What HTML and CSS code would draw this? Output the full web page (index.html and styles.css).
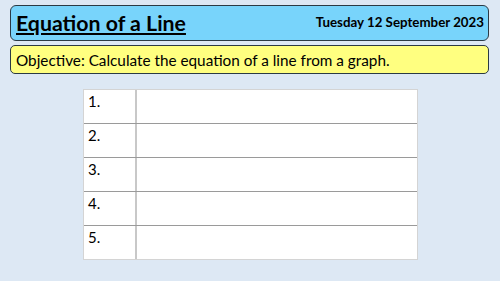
FILE: index.html
```html
<!DOCTYPE html>
<html>
<head>
<meta charset="utf-8">
<link rel="stylesheet" href="styles.css">
</head>
<body>
<div class="slide">
  <header class="title-bar">
    <h1 class="title">Equation of a Line</h1>
    <div class="date">Tuesday 12 September 2023</div>
  </header>
  <div class="objective">Objective: Calculate the equation of a line from a graph.</div>
  <div class="table">
    <div class="row"><div class="num">1.</div><div class="cell"></div></div>
    <div class="row"><div class="num">2.</div><div class="cell"></div></div>
    <div class="row"><div class="num">3.</div><div class="cell"></div></div>
    <div class="row"><div class="num">4.</div><div class="cell"></div></div>
    <div class="row"><div class="num">5.</div><div class="cell"></div></div>
  </div>
</div>
</body>
</html>
```
FILE: styles.css
```css
html, body {
  margin: 0;
  padding: 0;
}
body {
  width: 500px;
  height: 281px;
  background: #dde8f4;
  font-family: Lato, "Open Sans", sans-serif;
  color: #000;
  overflow: hidden;
}
.slide {
  padding: 5px 11px 0 10px;
  display: flex;
  flex-direction: column;
}
.title-bar {
  height: 36px;
  box-sizing: border-box;
  background: #78d4fb;
  border: 1.5px solid #2b3a44;
  border-radius: 6px;
  display: flex;
  align-items: center;
  justify-content: space-between;
  padding: 0 4px 0 5px;
}
.title {
  margin: 0;
  margin-top: 2px;
  font-size: 21.3px;
  font-weight: 700;
  text-decoration: underline;
  text-decoration-thickness: 2px;
  text-underline-offset: 2px;
  line-height: 1;
}
.date {
  font-size: 13.3px;
  font-weight: 700;
  margin-top: -3px;
}
.objective {
  margin-top: 4px;
  height: 29px;
  box-sizing: border-box;
  background: #ffff80;
  border: 1.5px solid #2b3a44;
  border-radius: 5px;
  display: flex;
  align-items: center;
  padding: 0 5px;
  font-size: 15.3px;
}
.table {
  margin: 15px 0 0 73px;
  width: 333px;
  background: #fff;
  border: 1px solid #d4d4d4;
  display: flex;
  flex-direction: column;
}
.row {
  height: 34px;
  display: flex;
  border-top: 1.5px solid #9a9a9a;
  box-sizing: border-box;
}
.row:first-child {
  border-top: none;
  height: 33px;
}
.num {
  width: 53px;
  border-right: 2px solid #c8c8c8;
  font-size: 15px;
  padding: 2px 0 0 4px;
  box-sizing: border-box;
}
.cell {
  flex: 1;
}
```
